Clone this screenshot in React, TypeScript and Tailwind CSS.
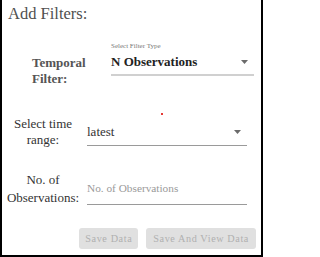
import React from "react";

const serif = { fontFamily: '"Liberation Serif", "Times New Roman", serif' };

function Arrow() {
  return (
    <svg width="7" height="4" viewBox="0 0 7 4" className="shrink-0">
      <path d="M0 0h7L3.5 4z" fill="#6b6b6b" />
    </svg>
  );
}

function SelectBox({
  value,
  width,
  className,
}: {
  value: string;
  width: string;
  className?: string;
}) {
  return (
    <div className={`${width} border-b border-[#9a9a9a] pb-[5px] ${className ?? ""}`}>
      <div className="flex items-center justify-between pr-[6px]">
        <span className="text-[13px] leading-[16px] text-[#333]">{value}</span>
        <Arrow />
      </div>
    </div>
  );
}

export default function App() {
  return (
    <div
      className="relative h-[257px] w-[263px] border-b-2 border-l-2 border-r-2 border-black bg-white"
      style={serif}
    >
      <h1 className="pl-[6px] pt-[4px] text-[16.5px] font-normal leading-[20px] text-[#505050]">
        Add Filters:
      </h1>

      <div className="mt-[18px] flex items-start">
        <div className="ml-[30px] mt-[13px] w-[79px] text-[13px] font-bold leading-[16px] text-[#555]">
          Temporal
          <br />
          Filter:
        </div>
        <div className="w-[143px] border-b-2 border-[#d0d0d0] pb-[4px]">
          <div className="text-[7px] leading-[9px] text-[#777]">Select Filter Type</div>
          <div className="mt-[3px] flex items-center justify-between pr-[6px]">
            <span className="text-[13px] font-bold leading-[16px] text-[#222]">
              N Observations
            </span>
            <Arrow />
          </div>
        </div>
      </div>

      <div className="mt-[29px] flex items-center">
        <div className="w-[82px] text-center text-[13px] leading-[16px] text-[#333]">
          Select time
          <br />
          range:
        </div>
        <SelectBox value="latest" width="w-[160px]" className="ml-[3px] mt-[5px]" />
      </div>

      <div className="mt-[23px] flex items-center">
        <div className="w-[82px] text-center text-[13px] leading-[18px] text-[#333]">
          No. of
          <br />
          Observations:
        </div>
        <div className="ml-[3px] mt-[2px] w-[160px] border-b border-[#9a9a9a] pb-[5px]">
          <span className="text-[11.3px] leading-[14px] text-[#9a9a9a]">
            No. of Observations
          </span>
        </div>
      </div>

      <div className="mt-[21px] flex justify-end gap-[8px] pr-[5px]">
        <button
          disabled
          className="h-[21px] rounded-[3px] bg-[#e0e0e0] px-[6px] text-[10.2px] leading-[21px] tracking-[0.6px] text-[#b0b0b0]"
        >
          Save Data
        </button>
        <button
          disabled
          className="h-[21px] rounded-[3px] bg-[#e0e0e0] px-[7px] text-[10.2px] leading-[21px] tracking-[0.6px] text-[#b0b0b0]"
        >
          Save And View Data
        </button>
      </div>

      <span className="absolute left-[159px] top-[113px] h-[1.5px] w-[1.5px] bg-[#e53935]" />
    </div>
  );
}
